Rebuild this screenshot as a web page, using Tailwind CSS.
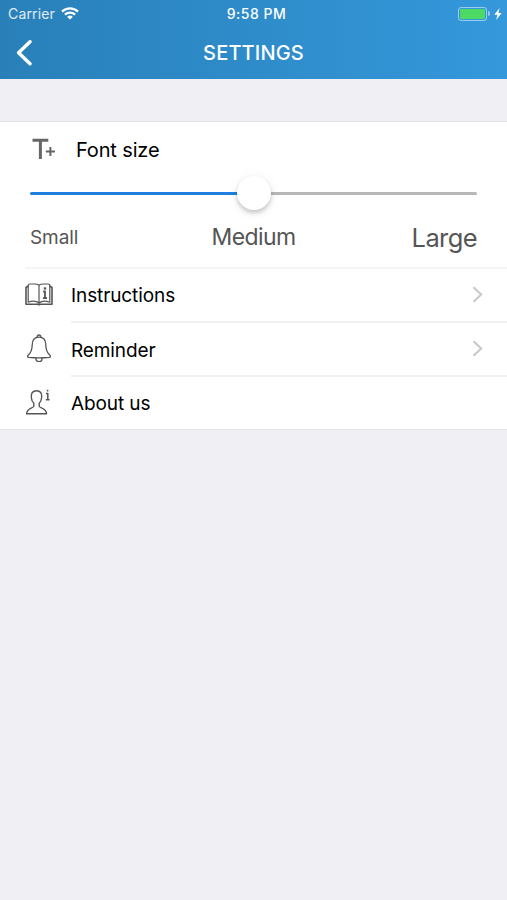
<!DOCTYPE html>
<html lang="en">
<head>
    <meta charset="UTF-8">
    <meta name="viewport" content="width=device-width, initial-scale=1.0">
    <title>Settings</title>
    <script src="https://cdn.jsdelivr.net/npm/@tailwindcss/browser@4"></script>
</head>
<body class="bg-[#efeff4] min-h-screen font-['Inter','Liberation_Sans',sans-serif] text-black">
    <header class="h-[79px] bg-linear-to-r from-[#2980b9] to-[#3498db] text-white">
        <!-- Status bar -->
        <div class="grid grid-cols-3 items-center h-[27px] pl-2 pr-[5px]">
            <div class="flex items-center text-[14px] text-white/85">
                <span class="tracking-[0.15px]">Carrier</span>
                <svg class="ml-[6px] w-[18px] h-[13px]" viewBox="0 0 18 13" fill="none" stroke="white" stroke-width="2.2">
                    <path d="M1 4.6a11.6 11.6 0 0 1 16 0"></path>
                    <path d="M3.9 7.6a7.4 7.4 0 0 1 10.2 0"></path>
                    <path d="M9 12.6L6.2 9.9a4 4 0 0 1 5.6 0z" fill="white" stroke="none"></path>
                </svg>
            </div>
            <div class="text-center text-[14px] font-medium tracking-[0.5px] pl-[3px]">9:58 PM</div>
            <div class="flex items-center justify-end">
                <div class="w-[29px] h-[14px] border border-white/50 rounded-[3px] p-px">
                    <div class="h-full bg-[#4cd964] rounded-[1px]"></div>
                </div>
                <div class="ml-px w-[2px] h-[5px] bg-white/50 rounded-r-full"></div>
                <svg class="ml-[4px] w-[8px] h-[12px]" viewBox="0 0 8 12" fill="white">
                    <path d="M5.6 0L0.3 6.8H3.4L2.2 12L7.7 4.9H4.5z"></path>
                </svg>
            </div>
        </div>
        <!-- Nav bar -->
        <div class="grid grid-cols-3 items-center h-[52px] px-4">
            <svg class="w-[17px] h-[27px]" viewBox="0 0 17 27" fill="none" stroke="white" stroke-width="3.4" stroke-linecap="round" stroke-linejoin="round">
                <path d="M14 1.8L2.6 12.8L14 23.8"></path>
            </svg>
            <h1 class="pb-px text-center text-[20px] font-medium tracking-[0.15px] whitespace-nowrap">SETTINGS</h1>
        </div>
    </header>

    <main class="mt-[42px] bg-white border-y border-[#e4e4e8]">
        <section class="h-[145px] px-[30px]">
            <div class="flex items-center h-[54px]">
                <svg class="ml-[2px] w-[24px] h-[22px]" viewBox="0 0 24 22" fill="none" stroke="#666666">
                    <path d="M0.5 2.3H16.3M8.4 2.3V21" stroke-width="3"></path>
                    <path d="M13.8 13.5H23M18.4 9V18" stroke-width="2"></path>
                </svg>
                <h2 class="ml-[20px] pt-px text-[20px] tracking-[-0.15px]">Font size</h2>
            </div>

            <!-- Slider -->
            <div class="relative flex items-center h-[34px]">
                <div class="w-1/2 h-[3px] bg-[#1f7fe0] rounded-l-full"></div>
                <div class="w-1/2 h-[3px] bg-[#b7b7b7] rounded-r-full"></div>
                <div class="absolute left-1/2 top-0 -translate-x-1/2 size-[34px] bg-white rounded-full shadow-[0_3px_4px_rgba(0,0,0,0.18),0_2px_12px_rgba(0,0,0,0.08)]"></div>
            </div>

            <div class="grid grid-cols-3 items-center h-[54px] text-[#555555]">
                <span class="pt-[2px] text-[19px] tracking-[-0.1px]">Small</span>
                <span class="text-center text-[23px] tracking-[-0.6px]">Medium</span>
                <span class="pt-[2px] text-right text-[25.5px] tracking-[-0.6px]">Large</span>
            </div>
        </section>

        <ul>
            <li class="ml-[25px] flex items-center h-[54px] border-t-2 border-[#f5f5f6]">
                <svg class="w-[28px] h-[23px] shrink-0 mb-[2px]" viewBox="0 0 28 23" fill="none" stroke="#555555" stroke-width="1.2" stroke-linejoin="round">
                    <path d="M3.2 3L1 4.5V21.2H12.2Q14 22.4 15.8 21.2H27V4.5L24.8 3" stroke-width="1.6"></path>
                    <path d="M14 2.3Q12.5 1 9.5 1H5Q3.2 1 3.2 3V19.2Q7 17.8 10.5 18.4Q13 18.8 14 20.5Q15 18.8 17.5 18.4Q21 17.8 24.8 19.2V3Q24.8 1 23 1H18.5Q15.5 1 14 2.3V20.5"></path>
                    <path d="M18.2 8.5H20V14.8M18 15.2H22" stroke-width="1.8"></path>
                    <path d="M20 4.3V6.6" stroke-width="2.4"></path>
                </svg>
                <a href="#" class="ml-[18px] flex flex-1 items-center justify-between h-full pr-[24px] text-[19px]">
                    <span class="pt-[2px] tracking-[-0.1px]">Instructions</span>
                    <svg class="w-[11px] h-[17px] mb-px" viewBox="0 0 11 17" fill="none" stroke="#c7c7cc" stroke-width="2">
                        <path d="M1.5 1.2L9.2 8.5L1.5 15.8"></path>
                    </svg>
                </a>
            </li>
            <li class="flex items-center h-[54px] pl-[25px]">
                <svg class="w-[28px] h-[28px] shrink-0" viewBox="0 0 28 28" fill="none" stroke="#555555" stroke-width="1.3" stroke-linejoin="round">
                    <path d="M14 3.2C9.3 3.2 7.3 6.5 7.2 11C7.1 16.5 5.6 19 3.3 21C2.2 22.1 2.3 23.2 3.8 23.4Q14 24.4 24.2 23.4C25.7 23.2 25.8 22.1 24.7 21C22.4 19 20.9 16.5 20.8 11C20.7 6.5 18.7 3.2 14 3.2z"></path>
                    <path d="M12.2 3.3C11.8 0.2 16.2 0.2 15.8 3.3M11 24V25A3 2.7 0 0 0 17 25V24"></path>
                </svg>
                <a href="#" class="ml-[18px] flex flex-1 items-center justify-between h-full border-t-2 border-[#f1f1f3] pr-[24px] text-[19px]">
                    <span class="pt-[5px] tracking-[-0.1px]">Reminder</span>
                    <svg class="w-[11px] h-[17px] mb-px" viewBox="0 0 11 17" fill="none" stroke="#c7c7cc" stroke-width="2">
                        <path d="M1.5 1.2L9.2 8.5L1.5 15.8"></path>
                    </svg>
                </a>
            </li>
            <li class="flex items-center h-[54px] pl-[25px]">
                <svg class="w-[28px] h-[26px] shrink-0 mb-px" viewBox="0 0 28 26" fill="none" stroke="#555555" stroke-width="1.4" stroke-linejoin="round">
                    <path d="M11.5 1.7C7.5 1.7 6 4.3 6.3 8.3C6.5 11 7.3 13 8.8 14.3V17.3C8.6 19.3 2 18.8 1.6 24.8H21.6C21.2 18.8 14.4 19.3 14.2 17.3V14.3C15.7 13 16.5 11 16.7 8.3C17 4.3 15.5 1.7 11.5 1.7z"></path>
                    <path d="M21 4.5H22.8V10.6M20.8 10.8H24.6M22.6 0.8V2.6" stroke-width="1.5"></path>
                </svg>
                <a href="#" class="ml-[18px] flex flex-1 items-center h-full border-t-2 border-[#f1f1f3] text-[19px]">
                    <span class="pt-[3px] tracking-[-0.1px]">About us</span>
                </a>
            </li>
        </ul>
    </main>
</body>
</html>
